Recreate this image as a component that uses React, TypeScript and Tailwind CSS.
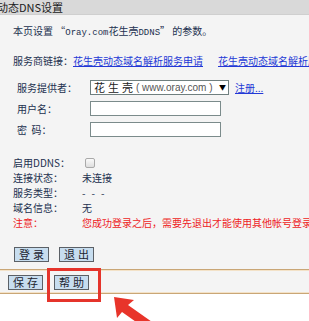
import React from "react";

const F = { fontFamily: '"Noto Sans CJK SC", "Liberation Sans", sans-serif' };

function Btn({ children }: { children: React.ReactNode }) {
  return (
    <div className="h-[15px] w-[35px] flex items-center justify-center bg-[#c7ddef] border border-[#5b6066] text-[11px] leading-none text-[#1c2430] tracking-[3px] pl-[3px]">
      {children}
    </div>
  );
}

export default function App() {
  return (
    <div
      className="w-[309px] h-[321px] overflow-hidden relative bg-white text-[10px] text-[#22304f]"
      style={F}
    >
      {/* header */}
      <div className="h-[15px] bg-[#d9d9d9] border-b border-[#cfcfcf] flex items-center text-[11px] text-[#1b1b1b] leading-none">
        <span className="-ml-[3px] whitespace-nowrap">动态DNS设置</span>
      </div>

      <div className="bg-[#f4f4f4] pl-[13px] pt-[8px] pb-[7px] whitespace-nowrap">
        <div className="h-4 leading-4">
          本页设置 “<span style={{ fontFamily: '"Liberation Mono", monospace' }} className="text-[9px]">Oray.com</span>花生壳<span style={{ fontFamily: '"Liberation Mono", monospace' }} className="text-[9px]">DDNS</span>” 的参数。
        </div>
        <div className="h-4 leading-4 mt-[14px] flex">
          <span className="w-[62px]">服务商链接：</span>
          <span className="text-[#2338d6] underline">花生壳动态域名解析服务申请</span>
          <span className="ml-[15px] text-[#2338d6] underline">花生壳动态域名解析服务</span>
        </div>

        <div className="mt-[10px] h-4 flex items-center">
          <span className="w-[77px] pl-[4px]">服务提供者：</span>
          <div className="h-[15px] w-[139px] bg-white border border-[#6f7f7f] flex items-center pl-[3px] pr-[2px]">
            <span className="text-[11px] tracking-[3px] text-[#222]">花生壳</span>
            <span className="text-[10px] text-[#555]" style={{ fontFamily: '"Liberation Sans", sans-serif' }}>
              ( www.oray.com )
            </span>
            <span className="ml-auto text-[7px] text-black leading-none">▼</span>
          </div>
          <span className="ml-[6px] text-[#2338d6] underline">注册...</span>
        </div>
        <div className="mt-[5px] h-4 flex items-center">
          <span className="w-[77px] pl-[4px]">用户名：</span>
          <div className="h-[15px] w-[131px] bg-white border border-[#7b8b8b]" />
        </div>
        <div className="mt-[5px] h-4 flex items-center">
          <span className="w-[77px] pl-[4px]">密&nbsp;&nbsp;码：</span>
          <div className="h-[15px] w-[131px] bg-white border border-[#7b8b8b]" />
        </div>

        <div className="mt-[18px]">
          <div className="h-[15px] flex items-center">
            <span className="w-[69px]">启用DDNS：</span>
            <span className="w-[10px] h-[10px] rounded-[2px] border border-[#a9a9a9] bg-gradient-to-b from-[#fafafa] to-[#dedede] ml-[3px]" />
          </div>
          <div className="h-[15px] flex items-center">
            <span className="w-[69px]">连接状态：</span>
            <span>未连接</span>
          </div>
          <div className="h-[15px] flex items-center">
            <span className="w-[69px]">服务类型：</span>
            <span className="tracking-[6px]">---</span>
          </div>
          <div className="h-[15px] flex items-center">
            <span className="w-[69px]">域名信息：</span>
            <span>无</span>
          </div>
          <div className="h-[15px] flex items-center text-[#ee1c24]">
            <span className="w-[69px] shrink-0">注意：</span>
            <span>您成功登录之后，需要先退出才能使用其他帐号登录</span>
          </div>
        </div>

        <div className="mt-[17px] flex gap-[10px] pl-[1px]">
          <Btn>登录</Btn>
          <Btn>退出</Btn>
        </div>
      </div>

      <div className="h-[1px] bg-[#c9a676]" />
      <div className="h-[1px] bg-[#f3e2c8]" />
      <div className="bg-[#f4f4f4] pl-[8px] pt-[4px] pb-[2px] flex gap-[11px]">
        <Btn>保存</Btn>
        <Btn>帮助</Btn>
      </div>
      <div className="h-[1px] bg-[#f3e2c8]" />
      <div className="h-[1px] bg-[#c9a676]" />

      {/* annotation overlay */}
      <div className="absolute left-[47px] top-[268px] w-[54px] h-[34px] border-[3px] border-[#e5342b]" />
      <svg className="absolute left-0 top-0" width="309" height="321" viewBox="0 0 309 321">
        <polygon points="114,297 134,300 128,305 162,329 156,336 122,312 117,318" fill="#e8342a" />
      </svg>
    </div>
  );
}
